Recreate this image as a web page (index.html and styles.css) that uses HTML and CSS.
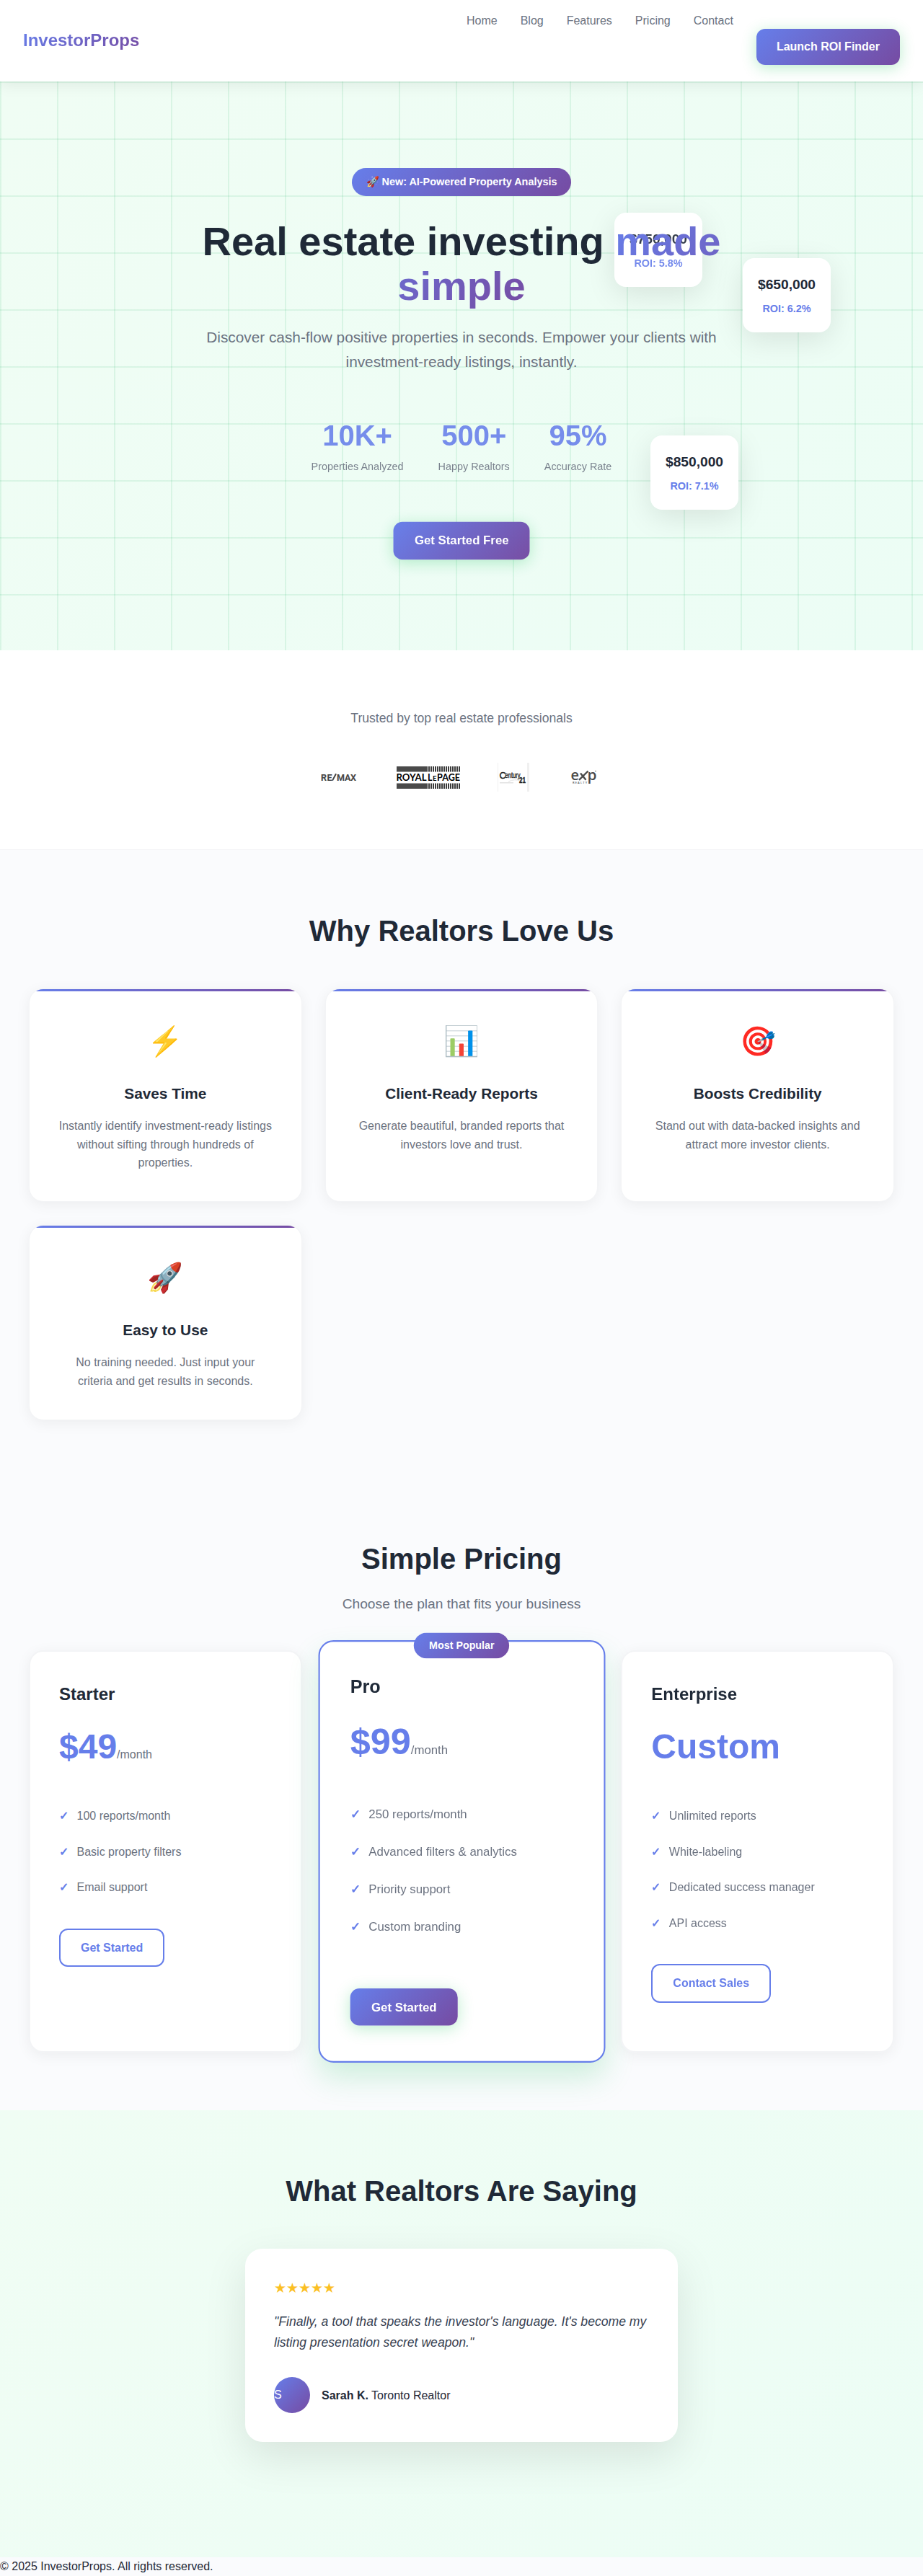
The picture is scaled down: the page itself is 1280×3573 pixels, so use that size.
FILE: index.html
```html
<!DOCTYPE html>
<html lang="en">
<head>
<meta charset="utf-8">
<title>InvestorProps</title>
<link rel="stylesheet" href="styles.css">
</head>
<body>
<header class="header">
  <div class="logo">InvestorProps</div>
  <nav class="nav">
    <a>Home</a><a>Blog</a><a>Features</a><a>Pricing</a><a>Contact</a>
    <a class="btn btn-primary">Launch ROI Finder</a>
  </nav>
</header>

<section class="hero">
  <div class="float-card float-one"><div class="float-price">$750,000</div><div class="float-roi">ROI: 5.8%</div></div>
  <div class="float-card float-two"><div class="float-price">$650,000</div><div class="float-roi">ROI: 6.2%</div></div>
  <div class="float-card float-three"><div class="float-price">$850,000</div><div class="float-roi">ROI: 7.1%</div></div>
  <div class="hero-content">
    <div class="hero-badge">🚀 New: AI-Powered Property Analysis</div>
    <h1>Real estate investing <span class="gradient-text">made simple</span></h1>
    <p class="hero-sub">Discover cash-flow positive properties in seconds. Empower your clients with investment-ready listings, instantly.</p>
    <div class="stats">
      <div><div class="stat-number">10K+</div><div class="stat-label">Properties Analyzed</div></div>
      <div><div class="stat-number">500+</div><div class="stat-label">Happy Realtors</div></div>
      <div><div class="stat-number">95%</div><div class="stat-label">Accuracy Rate</div></div>
    </div>
    <a class="btn btn-primary btn-pulse">Get Started Free</a>
  </div>
</section>

<section class="trusted">
  <p>Trusted by top real estate professionals</p>
  <div class="logos">
    <svg width="105" height="40" viewBox="0 0 105 40">
      <g class="mark-remax"><text x="1" y="24.600" textLength="15.500">RE</text><path d="M17 24.600L22 15.200"/><text x="23" y="24.600" textLength="27">MAX</text></g>
    </svg>
    <svg width="141" height="40" viewBox="0 0 141 40">
      <defs><pattern id="bars" width="3" height="40" patternUnits="userSpaceOnUse" x="45"><rect width="2" height="40" fill="#3c3c3c"/></pattern></defs>
      <path d="M1 5h43v7.500H1zM1 28.500h43V36H1z" fill="#4a4a4a"/>
      <path d="M45 5h44v7.500H45zM45 28.500h44V36H45z" fill="url(#bars)"/>
      <g class="mark-royal"><text x="0.500" y="24.800" textLength="42" lengthAdjust="spacingAndGlyphs">ROYAL</text><text x="44" y="24.800" textLength="6.500" lengthAdjust="spacingAndGlyphs">L</text><text class="small" x="51" y="24.800" textLength="5.500" lengthAdjust="spacingAndGlyphs">E</text><text x="57" y="24.800" textLength="32" lengthAdjust="spacingAndGlyphs">PAGE</text></g>
    </svg>
    <svg width="100" height="40" viewBox="0 0 100 40">
      <path d="M0 0h1v40H0zM41 0h3v40h-3z" fill="#f0f0f0"/>
      <path d="M3 27h19v1.500H3z" fill="#e2e2e2"/><path d="M15 26q9-4 16-1" fill="none" stroke="#e2e2e2"/>
      <g class="mark-century"><text class="big" x="2.500" y="21.500">C</text><text x="10.500" y="20.800" textLength="21" lengthAdjust="spacingAndGlyphs">entury</text><text class="num" x="30" y="27.800" textLength="9" lengthAdjust="spacingAndGlyphs">21</text></g>
    </svg>
    <svg width="40" height="40" viewBox="0 0 40 40">
      <g class="mark-exp"><text x="1.500" y="24" textLength="11.500" lengthAdjust="spacingAndGlyphs">e</text><path d="M13 23.800L25.500 11.500M15 14.500L22.500 23.800"/><text x="24.500" y="24" textLength="13" lengthAdjust="spacingAndGlyphs">p</text><text class="tiny" x="4" y="29" textLength="20">REALTY</text><path class="tm" d="M35 11.500h2"/></g>
    </svg>
  </div>
</section>

<section class="features">
  <h2>Why Realtors Love Us</h2>
  <div class="grid">
    <div class="feature"><div class="feature-icon">⚡</div><h3>Saves Time</h3><p>Instantly identify investment-ready listings without sifting through hundreds of properties.</p></div>
    <div class="feature"><div class="feature-icon">📊</div><h3>Client-Ready Reports</h3><p>Generate beautiful, branded reports that investors love and trust.</p></div>
    <div class="feature"><div class="feature-icon">🎯</div><h3>Boosts Credibility</h3><p>Stand out with data-backed insights and attract more investor clients.</p></div>
    <div class="feature"><div class="feature-icon">🚀</div><h3>Easy to Use</h3><p>No training needed. Just input your criteria and get results in seconds.</p></div>
  </div>
</section>

<section class="pricing">
  <h2>Simple Pricing</h2>
  <p class="pricing-sub">Choose the plan that fits your business</p>
  <div class="grid">
    <div class="plan">
      <h3>Starter</h3>
      <div class="price">$49<span>/month</span></div>
      <ul><li>100 reports/month</li><li>Basic property filters</li><li>Email support</li></ul>
      <a class="btn btn-outline">Get Started</a>
    </div>
    <div class="plan plan-popular">
      <div class="plan-badge">Most Popular</div>
      <h3>Pro</h3>
      <div class="price">$99<span>/month</span></div>
      <ul><li>250 reports/month</li><li>Advanced filters &amp; analytics</li><li>Priority support</li><li>Custom branding</li></ul>
      <a class="btn btn-primary">Get Started</a>
    </div>
    <div class="plan">
      <h3>Enterprise</h3>
      <div class="price">Custom</div>
      <ul><li>Unlimited reports</li><li>White-labeling</li><li>Dedicated success manager</li><li>API access</li></ul>
      <a class="btn btn-outline">Contact Sales</a>
    </div>
  </div>
</section>

<section class="testimonials">
  <h2>What Realtors Are Saying</h2>
  <div class="testimonial">
    <div class="stars">★★★★★</div>
    <p class="quote">"Finally, a tool that speaks the investor's language. It's become my listing presentation secret weapon."</p>
    <div class="author"><div class="avatar">S</div><div><strong>Sarah K.</strong> Toronto Realtor</div></div>
  </div>
</section>

<footer>© 2025 InvestorProps. All rights reserved.</footer>
</body>
</html>
```
FILE: styles.css
```css
* { box-sizing: border-box; margin: 0; padding: 0; }

body {
  font-family: "Liberation Sans", Arial, sans-serif;
  font-size: 16px;
  line-height: 1.6;
  color: #1f2937;
  background: #fafbfd;
  overflow-x: hidden;
}

/* Header */
.header {
  position: relative;
  z-index: 2;
  display: flex;
  justify-content: space-between;
  align-items: center;
  height: 113px;
  padding: 16px 32px;
  background: #fff;
  box-shadow: 0 4px 20px rgba(0, 0, 0, 0.08);
}
.logo {
  font-size: 24px;
  font-weight: 700;
  background: linear-gradient(135deg, #667eea, #764ba2);
  -webkit-background-clip: text;
  background-clip: text;
  color: transparent;
}
.nav { display: flex; align-items: flex-start; align-self: flex-start; gap: 32px; color: #6b7280; }
.nav .btn { margin-top: 24px; }

.btn {
  display: inline-block;
  padding: 12px 28px;
  border-radius: 12px;
  font-weight: 600;
  line-height: 25.6px;
}
.btn-primary {
  color: #fff;
  background: linear-gradient(135deg, #667eea, #764ba2);
  box-shadow: 0 4px 20px rgba(34, 197, 94, 0.3);
}
.btn-outline { color: #667eea; border: 2px solid #667eea; background: #fff; }
.btn-pulse { transform: scale(1.05); opacity: 0.98; }

/* Hero */
.hero {
  position: relative;
  height: 789px;
  padding-top: 120px;
  overflow: hidden;
  text-align: center;
  background:
    linear-gradient(rgba(16, 175, 90, 0.1) 2px, transparent 2px) 0 0 / 79px 79px,
    linear-gradient(90deg, rgba(16, 175, 90, 0.1) 2px, transparent 2px) 0 0 / 79px 79px,
    linear-gradient(135deg, #f0fdf4, #ecfdf5);
}
.hero-content { position: relative; width: 800px; margin: 0 auto; }
.hero-badge {
  width: fit-content;
  margin: 0 auto 32px;
  padding: 8px 20px;
  border-radius: 50px;
  font-size: 14.4px;
  font-weight: 600;
  color: #fff;
  background: linear-gradient(135deg, #667eea, #764ba2);
}
h1 { margin-bottom: 24px; font-size: 56px; font-weight: 700; line-height: 1.1; }
.gradient-text {
  background: linear-gradient(135deg, #667eea, #764ba2);
  -webkit-background-clip: text;
  background-clip: text;
  color: transparent;
}
.hero-sub { width: 720px; margin: 0 auto; font-size: 20.8px; line-height: 34px; color: #6b7280; }
.stats { display: flex; justify-content: center; gap: 48px; margin: 53px 0 66px; opacity: 0.88; }
.stat-number { font-size: 40px; font-weight: 700; line-height: 64px; color: #667eea; }
.stat-label { font-size: 14.4px; line-height: 23px; color: #6b7280; }
.float-card {
  position: absolute;
  width: 122px;
  height: 103px;
  padding: 21px 0;
  border-radius: 16px;
  background: #fff;
  box-shadow: 0 10px 40px rgba(0, 0, 0, 0.1);
}
.float-one { left: 852px; top: 182px; }
.float-two { left: 1030px; top: 245px; }
.float-three { left: 902px; top: 491px; }
.float-price { font-size: 19.2px; font-weight: 700; line-height: 31px; }
.float-roi { margin-top: 7px; font-size: 14.4px; font-weight: 600; line-height: 23px; color: #667eea; }
.float-one .float-price, .float-one .float-roi { opacity: 0.9; }

/* Trusted */
.trusted {
  height: 277px;
  padding-top: 80px;
  border-bottom: 1px solid #f3f4f6;
  text-align: center;
  background: #fff;
  color: #6b7280;
  font-size: 17.6px;
}
.logos { display: flex; margin: 48px 0 0 444px; }
.mark-remax { font: 600 12.5px Roboto, sans-serif; fill: #444; stroke: #444; }
.mark-remax text { stroke-width: 0.2px; }
.mark-remax path { stroke-width: 2; }
.mark-royal { font: 700 12.5px Lato, sans-serif; fill: #000; }
.mark-royal .small { font-size: 10px; }
.mark-century { font: 400 11px "Liberation Sans", sans-serif; fill: #222; stroke: #222; stroke-width: 0.4px; }
.mark-century .big { font-size: 13px; }
.mark-century .num { font-weight: 700; }
.mark-exp { font: 600 20px "Open Sans", sans-serif; fill: #4a4a4a; }
.mark-exp path { stroke: #4a4a4a; stroke-width: 2.4; }
.mark-exp .tm { stroke-width: 0.8; }
.mark-exp .tiny { font-size: 4px; }

/* Shared section layout */
h2 { font-size: 40px; line-height: 64px; text-align: center; }
.grid { display: grid; grid-template-columns: repeat(3, 1fr); gap: 32px; width: 1200px; margin: 48px auto 0; }
.features { padding: 80px 0; }

.feature {
  position: relative;
  overflow: hidden;
  padding: 40px;
  border: 1px solid #f3f4f6;
  border-radius: 20px;
  text-align: center;
  background: #fff;
  box-shadow: 0 4px 20px rgba(0, 0, 0, 0.06);
}
.feature::before {
  content: "";
  position: absolute;
  inset: 0 0 auto;
  height: 3px;
  background: linear-gradient(90deg, #667eea, #764ba2);
}
.feature-icon { margin-bottom: 24px; font-size: 40px; line-height: 64px; }
.feature h3 { margin-bottom: 16px; font-size: 20.8px; }
.feature p { color: #6b7280; }

/* Pricing */
.pricing { padding: 80.6px 0 80px; }
.pricing-sub { margin-top: 16px; font-size: 19.2px; text-align: center; color: #6b7280; }
.pricing .grid { grid-template-rows: 558px; }
.plan {
  position: relative;
  padding: 40px;
  border: 2px solid #f3f4f6;
  border-radius: 20px;
  background: #fff;
  box-shadow: 0 4px 20px rgba(0, 0, 0, 0.06);
}
.plan-popular {
  transform: scale(1.05);
  border-color: #667eea;
  box-shadow: 0 20px 40px rgba(34, 197, 94, 0.2);
}
.plan-badge {
  position: absolute;
  top: -12px;
  left: 50%;
  transform: translateX(-50%);
  padding: 6px 20px;
  border-radius: 20px;
  font-size: 13.6px;
  font-weight: 600;
  white-space: nowrap;
  color: #fff;
  background: linear-gradient(135deg, #667eea, #764ba2);
}
.plan h3 { margin-bottom: 16px; font-size: 24px; }
.price { margin-bottom: 32px; font-size: 48px; font-weight: 700; color: #667eea; }
.price span { font-size: 16px; font-weight: 400; color: #6b7280; }
.plan ul { margin-bottom: 32px; list-style: none; color: #6b7280; }
.plan li { display: flex; gap: 11.5px; padding: 12px 0; }
.plan li::before { content: "✓"; font-weight: 700; color: #667eea; }
.plan-popular ul { margin-bottom: 56px; }

/* Testimonials */
.testimonials { height: 620px; padding-top: 80px; background: linear-gradient(135deg, #f0fdf4, #ecfdf5); }
.testimonial {
  width: 600px;
  margin: 48px auto 0;
  padding: 40px;
  border-radius: 24px;
  background: #fff;
  box-shadow: 0 20px 60px rgba(0, 0, 0, 0.1);
}
.stars { margin-bottom: 16px; font-size: 19.2px; color: #fbbf24; }
.quote { margin-bottom: 32px; font-size: 17.6px; line-height: 1.7; font-style: italic; color: #374151; }
.author { display: flex; align-items: center; gap: 16px; }
.avatar {
  width: 50px;
  height: 50px;
  border-radius: 50%;
  line-height: 50px;
  color: #fff;
  background: linear-gradient(135deg, #667eea, #764ba2);
}
```
